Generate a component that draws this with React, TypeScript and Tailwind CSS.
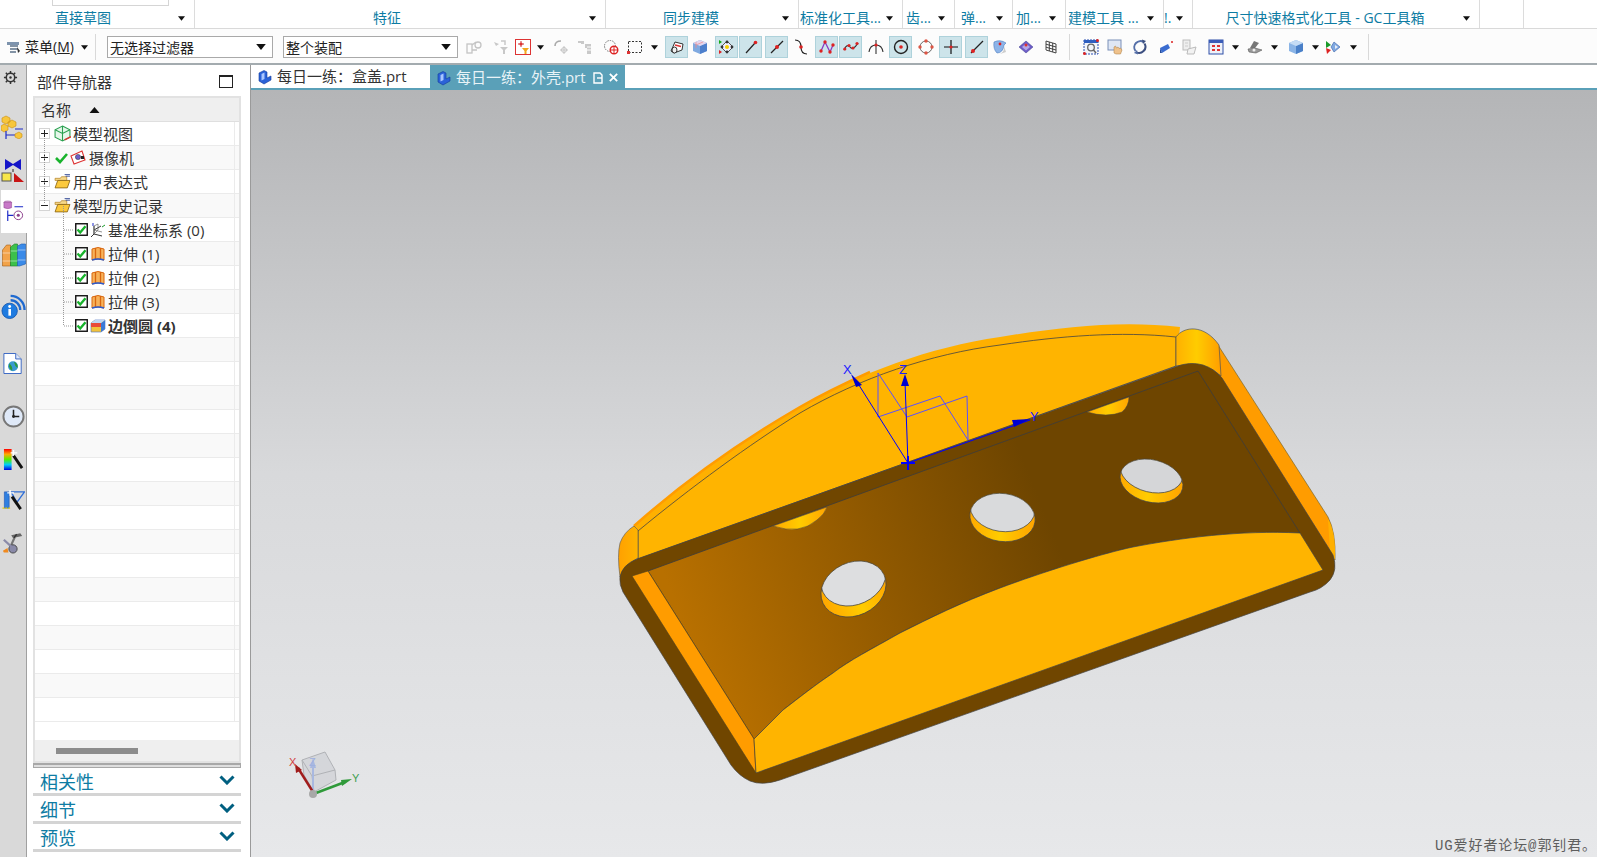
import React from "react";

type P = { c?: string; s?: number; children?: React.ReactNode };
const I = ({ c = "", s = 16, children }: P) => (
  <svg viewBox="0 0 16 16" width={s} height={s} className={`shrink-0 ${c}`}>{children}</svg>
);
const Arrow = ({ c = "" }: { c?: string }) => (
  <svg viewBox="0 0 8 5" width={7} height={5} className={`shrink-0 ${c}`}><path d="M0 0H8L4 5Z" fill="#111" /></svg>
);
const Press = ({ c = "", children }: { c?: string; children?: React.ReactNode }) => (
  <div className={`w-[23px] h-[22px] shrink-0 flex items-center justify-center bg-[#cde4ea] border border-[#aed2db] ${c}`}>{children}</div>
);
const Sep = ({ c = "" }: { c?: string }) => <div className={`w-px h-[26px] bg-[#d9d9d9] shrink-0 ${c}`} />;

const Group = ({ w, label, left = false, pl = "" }: { w: string; label: string; left?: boolean; pl?: string }) => (
  <div className={`${w} h-full shrink-0 border-r border-[#dcdcdc] flex items-center pt-[8px] pr-[9px]`}>
    <div className={`flex-1 min-w-0 whitespace-nowrap overflow-hidden text-[14px] leading-[18px] text-[#0e7ca3] ${left ? "text-left" : "text-center"} ${pl}`}>{label}</div>
    <Arrow />
  </div>
);

const Check = () => (
  <svg viewBox="0 0 13 13" width={13} height={13} className="shrink-0">
    <rect x=".75" y=".75" width="11.5" height="11.5" fill="#fff" stroke="#111" strokeWidth="1.4" />
    <path d="M2.5 6.5L5.2 9.5L10.5 3.2" fill="none" stroke="#18b32c" strokeWidth="2.4" />
  </svg>
);
const Plus = ({ minus = false }: { minus?: boolean }) => (
  <svg viewBox="0 0 11 11" width={11} height={11} className="shrink-0">
    <rect x=".5" y=".5" width="10" height="10" fill="#fff" stroke="#d4d4d4" />
    <path d={minus ? "M2 5.5H9" : "M2 5.5H9M5.5 2V9"} stroke="#222" />
  </svg>
);
const Folder = () => (
  <I s={17} c="ml-[4px]">
    <path d="M1 5H6L7 3.5H12V7H1Z" fill="#f7d98a" stroke="#b5862a" strokeWidth=".7" />
    <path d="M1 14L3.5 7H15L12.5 14Z" fill="#fcc93c" stroke="#8a6414" strokeWidth=".8" />
    <path d="M10 1.5H15M11 3H15" stroke="#26408f" strokeWidth=".8" />
  </I>
);
const Extrude = () => (
  <I>
    <path d="M2 3Q8 0 14 3V14Q8 12 2 14Z" fill="#f7b25a" stroke="#d9660f" strokeWidth="1" />
    <path d="M5.5 2V13M10.5 2V13" stroke="#d9660f" strokeWidth="1.3" />
    <path d="M2 14Q8 12 14 14" stroke="#2a5bd0" strokeWidth="1.4" fill="none" />
  </I>
);

const Row = ({ alt, children, pl }: { alt: boolean; children?: React.ReactNode; pl?: string }) => (
  <div className={`h-[24px] shrink-0 flex border-b border-[#ebebeb] ${alt ? "bg-[#f9f9f9]" : "bg-white"}`}>
    <div className={`flex-1 flex items-center text-[15px] leading-[20px] text-[#333] whitespace-nowrap ${pl ?? ""}`}>{children}</div>
    <div className="w-[5px] border-l border-[#ebebeb]" />
  </div>
);

const Section = ({ t }: { t: string }) => (
  <div className="h-[28px] ml-[6px] mr-[9px] border-b-[3px] border-[#d4d4d4] flex items-center justify-between pl-[7px] pr-[6px] pt-[2px]">
    <span className="text-[18px] leading-[24px] text-[#0e7ca3]">{t}</span>
    <svg viewBox="0 0 16 10" width={16} height={10} className="-mt-[3px]"><path d="M1.5 1.5L8 8L14.5 1.5" fill="none" stroke="#005f80" strokeWidth="3" /></svg>
  </div>
);

const TabIcon = () => (
  <I>
    <path d="M2 4L7 1.5L10 3V9L14 7V11L7 15L2 12Z" fill="#2a62d8" stroke="#123a9a" strokeWidth=".6" />
    <path d="M4.5 5L7.5 3.5V10L4.5 11.5Z" fill="#a9c6ff" />
  </I>
);

const Hole = ({ id, cx, cy, rx, ry, r, fill, dy = 10 }: { id: string; cx: number; cy: number; rx: number; ry: number; r: number; fill: string; dy?: number }) => (
  <g>
    <clipPath id={id}>
      <ellipse cx={cx} cy={cy} rx={rx} ry={ry} transform={`rotate(${r} ${cx} ${cy})`} />
    </clipPath>
    <ellipse cx={cx} cy={cy} rx={rx} ry={ry} transform={`rotate(${r} ${cx} ${cy})`} fill="url(#hy)" />
    <g clipPath={`url(#${id})`}>
      <ellipse cx={cx} cy={cy - dy} rx={rx} ry={ry} transform={`rotate(${r} ${cx} ${cy - dy})`} fill={fill} stroke="#444" strokeWidth=".7" />
    </g>
    <ellipse cx={cx} cy={cy} rx={rx} ry={ry} transform={`rotate(${r} ${cx} ${cy})`} fill="none" stroke="#444" strokeWidth=".7" />
  </g>
);

const Model = () => (
  <svg viewBox="251 90 1346 767" className="absolute left-0 top-0 w-[1346px] h-[767px]">
    <defs>
      <linearGradient id="fl" gradientUnits="userSpaceOnUse" x1="690" y1="640" x2="1040" y2="500">
        <stop offset="0" stopColor="#b87000" />
        <stop offset="1" stopColor="#6e4500" />
      </linearGradient>
      <linearGradient id="hy" x1="0" x2="1" y1="0" y2="0">
        <stop offset="0" stopColor="#ffa800" />
        <stop offset=".5" stopColor="#ffcc00" />
        <stop offset="1" stopColor="#ffa400" />
      </linearGradient>
      <linearGradient id="fr" gradientUnits="userSpaceOnUse" x1="1176" y1="0" x2="1222" y2="0">
        <stop offset="0" stopColor="#ffb000" />
        <stop offset=".45" stopColor="#ffcc00" />
        <stop offset="1" stopColor="#ff9c00" />
      </linearGradient>
      <linearGradient id="fc" gradientUnits="userSpaceOnUse" x1="618" y1="0" x2="638" y2="0">
        <stop offset="0" stopColor="#ffa000" />
        <stop offset="1" stopColor="#ffb400" />
      </linearGradient>
    </defs>
    {/* right wall */}
    <path d="M1218,345 L1328,517 Q1336,532 1335,560 L1220,378 Z" fill="#ff9c00" stroke="#6a5a20" strokeWidth=".6" />
    <path d="M1328,519 Q1336,532 1335,560 L1330,552 Z" fill="#ffb000" />
    {/* top wall */}
    <path d="M634,526 C690,476 750,436 800,407 C860,373 930,347 1000,337 C1060,327 1120,320 1180,327 L1176,365 L638,558 Z" fill="#ffb000" />
    <path d="M634,526 C690,476 750,436 800,407 C830,390 850,381 870,372" fill="none" stroke="#ff9c00" strokeWidth="2.5" />
    <path d="M638,531 C690,488 750,444 800,413 C860,378 930,354 1000,345 C1060,336 1120,331 1176,337 L1176,366 L638,559 Z" fill="#ffb400" stroke="#444" strokeWidth=".8" />
    <path d="M638,530 L634,526 Q624,532 620,543 Q617,555 620,577 Q624,565 638,558 Z" fill="url(#fc)" stroke="#555" strokeWidth=".6" />
    <path d="M1176,337 C1184,326 1204,324 1219,345 L1221,376 Q1204,360 1176,366 Z" fill="url(#fr)" stroke="#555" strokeWidth=".7" />
    {/* rim */}
    <path d="M637,559 L1175,367 Q1190,361 1203,365 Q1215,369 1222,378 L1333,555 Q1338,570 1330,580 Q1322,589 1310,592 L780,780 Q762,786 750,781 Q739,776 731,765 L623,592 Q619,584 620,577 Q622,565 637,559 Z" fill="#704600" stroke="#444" strokeWidth=".7" />
    {/* floor */}
    <path d="M648,571 L1198,371 L1300,533 C1240,530 1180,538 1133,547 C1100,554 1040,573 1000,588 C960,603 930,618 900,633 C870,650 850,660 833,673 C815,685 800,697 783,710 L754,739 Z" fill="url(#fl)" stroke="#3c3c3c" strokeWidth=".8" />
    {/* left wall */}
    <path d="M632,576 L648,571 L754,739 L756,773 Z" fill="#ff9c00" stroke="#4a4020" strokeWidth=".6" />
    {/* bottom wall */}
    <path d="M754,739 L756,773 L1323,570 L1300,533 C1240,530 1180,538 1133,547 C1100,554 1040,573 1000,588 C960,603 930,618 900,633 C870,650 850,660 833,673 C815,685 800,697 783,710 Z" fill="#ffb400" stroke="#444" strokeWidth=".7" />
    {/* half holes */}
    <path d="M773,526 Q800,535 817,520 Q825,514 827,507 Z" fill="url(#hy)" stroke="#444" strokeWidth=".5" />
    <path d="M1087,412 Q1107,418 1122,412 Q1129,406 1129,397 Z" fill="url(#hy)" stroke="#444" strokeWidth=".5" />
    {/* holes */}
    <Hole id="h1" cx={853.5} cy={589} rx={33.7} ry={26.6} r={-25} fill="#dddee0" dy={11} />
    <Hole id="h2" cx={1002.5} cy={517.5} rx={32.8} ry={24} r={8} fill="#d9dadc" />
    <Hole id="h3" cx={1151.5} cy={481} rx={32} ry={21.2} r={14} fill="#d5d6d8" />
    {/* datum csys */}
    <g fill="none" stroke="#5a50ff" strokeWidth="1">
      <path d="M878,373V417M878,373L907,417M878,417L940,396M907,417L967,396M940,396L968,440M967,396L968,440" />
    </g>
    <g stroke="#0000ff" fill="none">
      <path d="M908,463L857,382" />
      <path d="M908,463L905,382" />
      <path d="M908,463L1030,420" strokeWidth="1" />
      <path d="M901,463H915M908,456V470" strokeWidth="2" />
    </g>
    <path d="M851,374L862,385L856,387Z" fill="#0000d0" />
    <path d="M905,374L909,386H901Z" fill="#0000d0" />
    <path d="M1030,419L1014,427L1012,420Z" fill="#0000d0" />
    <g fontFamily="'Liberation Sans',sans-serif" fontSize="13" fill="#2020ff">
      <text x="843" y="374">X</text>
      <text x="899" y="374">Z</text>
      <text x="1030" y="421">Y</text>
    </g>
    {/* triad */}
    <g stroke="#b0b2b6" strokeWidth="1" fill="#c9cbd0" fillOpacity=".55">
      <path d="M302,760L325,752L335,770L336,780L314,792L304,775Z" />
      <path d="M302,760L312,776L335,770M312,776L314,792" fill="none" />
    </g>
    <path d="M313,792V762" stroke="#a8b8e0" strokeWidth="2" />
    <path d="M313,758L316,768H310Z" fill="#a8b8e0" />
    <path d="M313,792L298,768" stroke="#a01c1c" strokeWidth="2.5" />
    <path d="M295,764L302,770L296,773Z" fill="#a01c1c" />
    <path d="M316,793L345,782" stroke="#2f9a3a" strokeWidth="2.5" />
    <path d="M352,779L342,786L341,780Z" fill="#2f9a3a" />
    <circle cx="313" cy="794" r="4" fill="#a8a8a8" />
    <g fontFamily="'Liberation Sans',sans-serif" fontSize="11">
      <text x="289" y="766" fill="#d04040">X</text>
      <text x="309" y="766" fill="#9fb0e0">Z</text>
      <text x="352" y="782" fill="#3fa050">Y</text>
    </g>
  </svg>
);

const rows = Array.from({ length: 16 });

export default function App() {
  return (
    <div className="w-[1597px] h-[857px] overflow-hidden bg-white flex flex-col font-['Open_Sans','Noto_Sans_CJK_SC',sans-serif]">
      {/* ribbon group labels */}
      <div className="h-[29px] shrink-0 flex border-b border-[#d9d9d9] relative">
        <div className="absolute left-[52px] top-0 w-[117px] h-[6px] border border-t-0 border-[#d5d5d5]" />
        <Group w="w-[195px]" label="直接草图" pl="pr-[12px]" />
        <Group w="w-[411px]" label="特征" pl="pr-[10px]" />
        <Group w="w-[193px]" label="同步建模" pl="pr-[6px]" />
        <Group w="w-[104px]" label="标准化工具..." left pl="pl-[1px]" />
        <Group w="w-[52px]" label="齿..." left pl="pl-[3px]" />
        <Group w="w-[58px]" label="弹..." left pl="pl-[6px]" />
        <Group w="w-[53px]" label="加..." left pl="pl-[3px]" />
        <Group w="w-[98px]" label="建模工具 ..." left pl="pl-[2px]" />
        <Group w="w-[29px]" label="!." left />
        <Group w="w-[287px]" label="尺寸快速格式化工具 - GC工具箱" pl="pr-[6px]" />
        <div className="w-[44px] h-full shrink-0 border-r border-[#dcdcdc]" />
      </div>

      {/* toolbar */}
      <div className="h-[36px] shrink-0 flex items-center border-b-2 border-[#a3abaf] bg-[#fcfcfc] pt-[2px]">
        <I c="ml-[5px]">
          <path d="M2 3H14V6H2Z" fill="#7d93ad" />
          <path d="M5 7H13M5 10H13M5 13H11" stroke="#5b7088" strokeWidth="1.4" />
          <path d="M12 8L15 12L13 14Z" fill="#333" />
        </I>
        <span className="ml-[4px] w-[50px] text-[14px] leading-[18px] text-[#222] whitespace-nowrap">菜单(<u>M</u>)</span>
        <Arrow c="ml-[6px]" />
        <Sep c="ml-[7px]" />
        <div className="ml-[11px] w-[166px] h-[22px] shrink-0 border border-[#a9a9a9] bg-white flex items-center justify-between pl-[2px] pr-[6px] text-[14px] text-[#222]">
          无选择过滤器<Arrow c="w-[10px] h-[6px]" />
        </div>
        <div className="ml-[10px] w-[175px] h-[22px] shrink-0 border border-[#a9a9a9] bg-white flex items-center justify-between pl-[2px] pr-[6px] text-[14px] text-[#222]">
          整个装配<Arrow c="w-[10px] h-[6px]" />
        </div>
        <I c="ml-[8px]"><g fill="none" stroke="#c4c4c4" strokeWidth="1.3"><rect x="1" y="5" width="5" height="9" /><circle cx="12" cy="6" r="3" /><path d="M6 6L10 3M6 11H11" /></g></I>
        <I c="ml-[11px]"><path d="M1 3L6 5L3 7ZM7 8H15L12 11V15H10V11Z" fill="#c8c8c8" /><path d="M8 2H12V6" stroke="#c8c8c8" strokeWidth="1.5" fill="none" /></I>
        <I c="ml-[6px]"><rect x=".5" y=".5" width="15" height="15" fill="#fff" stroke="#d33" /><path d="M3 5H9M6 2V8" stroke="#c33" /><circle cx="6" cy="5" r="1.5" fill="#d33" /><path d="M7 9H14L11.5 12V15H9.5V12Z" fill="#f2a81d" /></I>
        <Arrow c="ml-[6px]" />
        <I c="ml-[9px]"><path d="M2 7Q2 2 8 2" stroke="#aaa" strokeWidth="1.6" fill="none" /><path d="M7 11H15M11 7V15" stroke="#c4c4c4" /><circle cx="11" cy="11" r="2.5" fill="none" stroke="#c4c4c4" /></I>
        <I c="ml-[8px]"><path d="M1 2H7V5H4V4H1ZM8 5H14V15H10V9H8Z" fill="#c9c9c9" /><path d="M10 8H14M10 11H14" stroke="#fff" /></I>
        <I c="ml-[10px]"><circle cx="7" cy="7" r="5.5" fill="none" stroke="#777" strokeDasharray="1.5 1" /><circle cx="11" cy="11" r="3.8" fill="#fff" stroke="#d22" strokeWidth="1.4" /><path d="M7 11H15M11 7V15" stroke="#d22" /></I>
        <I c="ml-[8px]"><rect x="1.5" y="2.5" width="13" height="11" fill="none" stroke="#333" strokeDasharray="2 1.5" /><rect x="0" y="12" width="3" height="3" fill="#d33" /></I>
        <Arrow c="ml-[8px]" />
        <Press c="ml-[7px]"><I><path d="M2 12L6 3L14 5L13 11L5 14Z" fill="#fff" stroke="#333" /><path d="M6 6L12 7.5" stroke="#d33" strokeWidth="1.5" /><ellipse cx="5.5" cy="11" rx="2.5" ry="3" fill="#eee" stroke="#333" /></I></Press>
        <I c="ml-[4px]"><path d="M1 4L8 1L15 4V12L8 15L1 12Z" fill="#7fa9e0" /><path d="M8 7L15 4V12L8 15Z" fill="#4d7fcc" /><path d="M1 4L8 1L15 4L8 7Z" fill="#e3d6ee" /><path d="M4 3V9M4 6L11 3" stroke="#e88" strokeWidth=".7" /></I>
        <Press c="ml-[7px]"><I><path d="M8 2L14 8L8 14L2 8Z" fill="#eef" stroke="#555" /><circle cx="8" cy="8" r="2" fill="#f5d000" /><circle cx="8" cy="3" r="1.4" fill="#333" /><circle cx="8" cy="13" r="1.4" fill="#333" /><circle cx="13" cy="8" r="1.4" fill="#333" /><circle cx="3" cy="8" r="1.4" fill="#333" /><path d="M0 1L3 3L0 5Z" fill="#1a1" /><path d="M0 11L3 13L0 15Z" fill="#d22" /></I></Press>
        <Press c="ml-[1px]"><I><path d="M3 14L12 4" stroke="#222" strokeWidth="1.2" /><circle cx="12.5" cy="3.5" r="1.8" fill="#d22" /></I></Press>
        <Press c="ml-[3px]"><I><path d="M2 14L14 2" stroke="#222" strokeWidth="1.2" /><circle cx="8" cy="8" r="2" fill="#d22" /></I></Press>
        <I c="ml-[5px]"><path d="M2 1Q8 1 8 8Q8 15 14 15" fill="none" stroke="#222" strokeWidth="1.2" /><circle cx="8" cy="8" r="1.8" fill="#d22" /></I>
        <Press c="ml-[6px]"><I><path d="M2 12L6 3L11 13L14 6" fill="none" stroke="#8a3ac0" strokeWidth="1.3" /><circle cx="2" cy="12" r="1.7" fill="#d22" /><circle cx="6" cy="3" r="1.7" fill="#d22" /><circle cx="11" cy="13" r="1.7" fill="#d22" /><circle cx="14" cy="6" r="1.7" fill="#d22" /></I></Press>
        <Press c="ml-[1px]"><I><path d="M1 11Q4 4 7 8T15 4" fill="none" stroke="#333" strokeWidth="1.2" /><circle cx="1.8" cy="10" r="1.6" fill="#d22" /><circle cx="6" cy="6.5" r="1.6" fill="#d22" /><circle cx="10" cy="9" r="1.6" fill="#d22" /><circle cx="14" cy="4.5" r="1.6" fill="#d22" /></I></Press>
        <I c="ml-[6px]"><path d="M1 13Q2 6 8 6T15 13M8 1V15" fill="none" stroke="#333" strokeWidth="1.1" /><circle cx="8" cy="6" r="1.6" fill="#d22" /></I>
        <Press c="ml-[5px]"><I><circle cx="8" cy="8" r="6.5" fill="none" stroke="#222" strokeWidth="1.4" /><circle cx="8" cy="8" r="1.8" fill="#d22" /></I></Press>
        <I c="ml-[6px]"><circle cx="8" cy="8" r="6" fill="none" stroke="#666" /><circle cx="8" cy="2" r="1.7" fill="#d54" /><circle cx="8" cy="14" r="1.7" fill="#d54" /><circle cx="2" cy="8" r="1.7" fill="#d54" /><circle cx="14" cy="8" r="1.7" fill="#d54" /></I>
        <Press c="ml-[5px]"><I><path d="M1 8H15M8 1V15" stroke="#111" strokeWidth="1.2" /><circle cx="8" cy="8" r="1.6" fill="#d22" /></I></Press>
        <Press c="ml-[3px]"><I><path d="M2 14L14 2" stroke="#222" strokeWidth="1.2" /><circle cx="4" cy="12" r="2" fill="#d22" /></I></Press>
        <I c="ml-[4px]"><path d="M2 3Q8 0 14 4L12 6Q11 14 5 14Q1 10 2 3Z" fill="#8db4e8" stroke="#4a7cc0" strokeWidth=".6" /><path d="M12 7Q13 12 8 15L14 13Z" fill="#ccc" /><circle cx="8" cy="5" r="1.4" fill="#d22" /></I>
        <I c="ml-[10px]"><path d="M1 8L8 2L15 8L8 14Z" fill="#6d5cc8" stroke="#3b3b8a" strokeWidth=".5" /><path d="M4 8L8 4.5L12 8L8 11.5Z" fill="#b3a6e6" /><circle cx="8" cy="6" r="1.5" fill="#d33" /></I>
        <I c="ml-[9px]"><path d="M3 2L13 5V14L3 11ZM6.3 3V12M9.7 4V13M3 5.2L13 8M3 8.2L13 11" fill="none" stroke="#333" strokeWidth=".9" /></I>
        <Sep c="ml-[10px]" />
        <I c="ml-[13px]"><rect x="1" y="1" width="14" height="14" fill="#f2f5fb" stroke="#2a4fb0" strokeDasharray="2 1" /><rect x="1" y="1" width="14" height="3" fill="#2f5fc0" /><circle cx="8" cy="8.5" r="3.3" fill="none" stroke="#666" strokeWidth="1.3" /><path d="M10.5 11L13 14" stroke="#666" strokeWidth="1.5" /><circle cx="1.5" cy="14.5" r="1.5" fill="#d22" /><circle cx="14.5" cy="1.5" r="1.5" fill="#d22" /></I>
        <I c="ml-[8px]"><rect x="1" y="1" width="13" height="10" fill="#dfe7f5" stroke="#7a8fb8" /><path d="M7 14V8L8.5 7L9.5 9L11 8L12 9.5L13.5 9L15 11L13.5 15H9Z" fill="#efc28c" stroke="#a87a3f" strokeWidth=".5" /></I>
        <I c="ml-[9px]"><path d="M12 3.2A6.2 6.2 0 0 0 3.5 12" fill="none" stroke="#556fa8" strokeWidth="2" /><path d="M4 13A6.2 6.2 0 0 0 12.5 4.5" fill="none" stroke="#3c4f80" strokeWidth="2" /><path d="M10 0.5L14 2L11 5Z" fill="#3c4f80" /><path d="M6 15.5L2 14L5 11Z" fill="#556fa8" /></I>
        <I c="ml-[10px]"><path d="M2 9L10 5L12 9L4 14Z" fill="#3a6cd0" /><path d="M2 9L4 14L2 14Z" fill="#244a9a" /><circle cx="14" cy="3" r="1" fill="#d22" /></I>
        <I c="ml-[7px]"><rect x="2" y="1" width="7" height="10" fill="#eee" stroke="#bbb" /><path d="M7 10L15 8L13 15L6 15Z" fill="#f2f2f2" stroke="#bbb" /><path d="M4 4H7M4 7H7" stroke="#ccc" /></I>
        <I c="ml-[11px]"><rect x="1" y="1" width="14" height="14" fill="#eef1f8" stroke="#2f4fa8" /><rect x="1" y="1" width="14" height="3" fill="#3a5cb8" /><path d="M4 6H7V8H4ZM9 6H12V8H9ZM4 10H7V12H4ZM9 10H12V12H9Z" fill="#d33" /></I>
        <Arrow c="ml-[8px]" />
        <I c="ml-[8px]"><path d="M3 9L7 2L12 4L8 9Z" fill="#777" /><path d="M1 10L8 9L15 11L9 14L2 13Z" fill="#999" stroke="#555" strokeWidth=".6" /><circle cx="7" cy="11" r="1.5" fill="#eee" /></I>
        <Arrow c="ml-[8px]" />
        <I c="ml-[10px]"><path d="M1 4L8 1L15 4V12L8 15L1 12Z" fill="#8ab4e6" /><path d="M8 7L15 4V12L8 15Z" fill="#4a80c8" /><path d="M1 4L8 1L15 4L8 7Z" fill="#c5dcf5" /></I>
        <Arrow c="ml-[8px]" />
        <I c="ml-[7px]"><path d="M8 3L14 8L8 13L5 8Z" fill="#7fa8e0" stroke="#4a70b0" strokeWidth=".7" /><path d="M9 6L12 8L9 10Z" fill="#e8eef8" /><path d="M0 2L5 6L0 9Z" fill="#1a9a2a" /><path d="M0 9L5 11L1 15Z" fill="#d22" /></I>
        <Arrow c="ml-[8px]" />
        <Sep c="ml-[11px]" />
      </div>

      <div className="flex-1 flex min-h-0">
        {/* left rail */}
        <div className="w-[27px] shrink-0 bg-[#d9d9d9] border-r border-[#a0a0a0] flex flex-col items-center">
          <I c="mt-[5px] -ml-[5px]" s={15}><circle cx="8" cy="8" r="4.5" fill="none" stroke="#333" strokeWidth="1.6" /><circle cx="8" cy="8" r="1.3" fill="#333" /><path d="M8 1V3.5M8 12.5V15M1 8H3.5M12.5 8H15M3 3L4.8 4.8M11.2 11.2L13 13M13 3L11.2 4.8M4.8 11.2L3 13" stroke="#333" strokeWidth="1.6" /></I>
          <svg viewBox="0 0 24 24" width={24} height={24} className="mt-[30px] shrink-0">
            <path d="M5 1L9 3V7L5 9L1 7V3ZM11 5L15 7V11L11 13L7 11V7ZM3 9L7 11V15L3 17L0 15V11Z" fill="#f7c63c" stroke="#c98f10" strokeWidth=".6" />
            <path d="M5 16V24M5 20H14M14 14H22" stroke="#1a28c8" strokeWidth="1.2" fill="none" />
            <path d="M14 19L18 17L21 19V22L18 24L14 22Z" fill="#f7c63c" stroke="#c98f10" strokeWidth=".6" />
          </svg>
          <svg viewBox="0 0 24 24" width={24} height={24} className="mt-[20px] shrink-0">
            <path d="M4 0L12 5L20 0V11L12 6L4 11Z" fill="#1515c8" />
            <path d="M12 10V13" stroke="#222" />
            <rect x="1" y="14" width="9" height="8" fill="#f7e64a" stroke="#555" />
            <path d="M13 14L23 23H13Z" fill="#c81414" />
          </svg>
          <div className="w-[26px] h-[43px] mt-[7px] -mr-px bg-white flex items-center justify-center shrink-0">
            <svg viewBox="0 0 24 24" width={23} height={23}>
              <ellipse cx="6" cy="2.5" rx="4" ry="1.5" fill="#d8a8d8" stroke="#8a3c8a" strokeWidth=".5" />
              <path d="M2 2.5V8Q6 10 10 8V2.5Z" fill="#c878c8" stroke="#8a3c8a" strokeWidth=".5" />
              <path d="M6 11V22M6 16H12M13 7H22" stroke="#1a28c8" strokeWidth="1.2" fill="none" />
              <circle cx="17" cy="16" r="4.5" fill="none" stroke="#8a3c8a" />
              <circle cx="17" cy="16" r="1.6" fill="#8a3c8a" />
            </svg>
          </div>
          <svg viewBox="0 0 24 24" width={25} height={24} className="mt-[10px] shrink-0">
            <path d="M1 7L5 2H9V23H1Z" fill="#f2a34a" stroke="#a35c10" strokeWidth=".6" />
            <path d="M9 4L13 1H16V23H9Z" fill="#3cc04a" stroke="#1a7a28" strokeWidth=".6" />
            <path d="M16 3L20 1H24V21L18 23H16Z" fill="#3a8ae8" stroke="#1a5ab0" strokeWidth=".6" />
            <path d="M1 10H9M1 18H9M9 8H16M9 18H16M16 7H24M16 17H24" stroke="#fff" strokeOpacity=".6" strokeWidth=".8" />
          </svg>
          <svg viewBox="0 0 26 26" width={25} height={26} className="mt-[27px] shrink-0">
            <circle cx="9" cy="17" r="8" fill="#1f7be0" stroke="#0d4fa8" strokeWidth=".8" />
            <circle cx="9" cy="12.5" r="1.5" fill="#fff" />
            <rect x="7.7" y="15" width="2.7" height="7" fill="#fff" />
            <path d="M10 6A10 10 0 0 1 20 16M10 1.5A14.5 14.5 0 0 1 24.5 16" fill="none" stroke="#1f6ad0" strokeWidth="2.4" />
          </svg>
          <svg viewBox="0 0 22 24" width={20} height={23} className="mt-[32px] shrink-0">
            <path d="M1 1H14L20 7V23H1Z" fill="#fff" stroke="#2f5fc0" strokeWidth="1" />
            <path d="M14 1V7H20" fill="#dfe7f8" stroke="#2f5fc0" />
            <circle cx="11" cy="15" r="5.5" fill="#3a9ad0" />
            <path d="M7 12Q11 15 10 20Q7 18 6.5 15ZM12 10Q17 12 16 17Q13 15 12 10Z" fill="#2f9a3a" />
          </svg>
          <svg viewBox="0 0 24 24" width={23} height={23} className="mt-[30px] shrink-0">
            <circle cx="12" cy="12" r="10.5" fill="#dfe9f8" stroke="#777" strokeWidth="2" />
            <path d="M12 5V12H18" stroke="#222" strokeWidth="1.6" fill="none" />
            <circle cx="12" cy="12" r="1.5" fill="#222" />
          </svg>
          <svg viewBox="0 0 22 24" width={21} height={23} className="mt-[20px] shrink-0">
            <defs>
              <linearGradient id="rb" x1="0" x2="0" y1="0" y2="1">
                <stop offset="0" stopColor="#f00" /><stop offset=".25" stopColor="#fa0" /><stop offset=".5" stopColor="#5e0" /><stop offset=".75" stopColor="#0cf" /><stop offset="1" stopColor="#00d" />
              </linearGradient>
            </defs>
            <rect x="1" y="1" width="8" height="22" fill="url(#rb)" />
            <path d="M11 8L20 21" stroke="#111" strokeWidth="3" />
            <path d="M11 2V8M8 5H15" stroke="#fff" strokeWidth="1.4" />
          </svg>
          <svg viewBox="0 0 24 24" width={24} height={23} className="mt-[18px] shrink-0">
            <path d="M3 3H8V20H3Z" fill="#2f7fe0" stroke="#1a50b0" strokeWidth=".6" />
            <path d="M10 3H24L16 14Z" fill="none" stroke="#2f6fd8" strokeWidth="1.4" />
            <path d="M11 8L20 21" stroke="#111" strokeWidth="3" />
            <path d="M9 1V7M6 4H13" stroke="#fff" strokeWidth="1.4" />
            <path d="M1 20H9" stroke="#f0d000" strokeWidth="1.4" strokeDasharray="2 1" />
          </svg>
          <svg viewBox="0 0 24 24" width={22} height={23} className="mt-[19px] shrink-0">
            <path d="M10 4L20 2L22 5L12 7Z" fill="#666" />
            <path d="M14 6L9 17" stroke="#777" strokeWidth="2.4" />
            <path d="M16 3L13 7" stroke="#333" strokeWidth="1.5" />
            <circle cx="12" cy="19" r="4.5" fill="#8a8aa8" stroke="#444" />
            <path d="M2 9L14 20" stroke="#8a8aa8" strokeWidth="2.4" />
            <path d="M1 21L6 18L7 23H2Z" fill="#f08a20" />
          </svg>
        </div>

        {/* part navigator */}
        <div className="w-[224px] shrink-0 border-r border-[#9a9a9a] bg-white flex flex-col">
          <div className="h-[31px] shrink-0 flex items-center justify-between pl-[10px] pr-[17px] pt-[2px]">
            <span className="text-[15px] leading-[20px] text-[#333]">部件导航器</span>
            <div className="w-[14px] h-[13px] border border-t-2 border-[#222]" />
          </div>
          <div className="h-[667px] shrink-0 ml-[6px] mr-[9px] border-2 border-[#e2e2e2] flex flex-col relative overflow-hidden">
            <div className="h-[24px] shrink-0 bg-[#efefef] border-b border-[#dfdfdf] flex items-center pl-[6px]">
              <span className="text-[15px] leading-[20px] text-[#333]">名称</span>
              <svg viewBox="0 0 10 6" width={11} height={6} className="ml-[18px]"><path d="M0 6L5 0L10 6Z" fill="#111" /></svg>
            </div>
            <div className="flex-1 min-h-0 overflow-hidden flex flex-col">
              <Row alt={false} pl="pl-[4px]">
                <Plus />
                <I c="ml-[4px]" s={17}><path d="M8 1L15 4.5V11.5L8 15L1 11.5V4.5Z" fill="#e5f7ea" stroke="#2aa050" /><path d="M1 4.5L8 8L15 4.5M8 8V15M8 1V8" stroke="#2aa050" fill="none" /><path d="M10 14L16 11" stroke="#d33" strokeWidth="1.4" /></I>
                <span className="ml-[2px]">模型视图</span>
              </Row>
              <Row alt pl="pl-[4px]">
                <Plus />
                <svg viewBox="0 0 13 12" width={13} height={12} className="ml-[5px] shrink-0"><path d="M1 6L5 10L12 2" fill="none" stroke="#18b32c" strokeWidth="2.6" /></svg>
                <I c="ml-[2px]"><path d="M1 6L12 1L15 10L4 14Z" fill="#fff" stroke="#d33" strokeWidth="1.1" /><circle cx="8" cy="7" r="2.6" fill="#6d5cc8" stroke="#333" strokeWidth=".5" /><rect x="11" y="6" width="3" height="3" fill="#222" /></I>
                <span className="ml-[3px]">摄像机</span>
              </Row>
              <Row alt={false} pl="pl-[4px]">
                <Plus />
                <Folder />
                <span className="ml-[2px]">用户表达式</span>
              </Row>
              <Row alt pl="pl-[4px]">
                <Plus minus />
                <Folder />
                <span className="ml-[2px]">模型历史记录</span>
              </Row>
              <Row alt={false} pl="pl-[40px]">
                <Check />
                <I c="ml-[2px]"><path d="M4 4V12L12 14M4 12L1 15M4 8L11 4" fill="none" stroke="#333" /><path d="M4 4L8 2V8L4 12ZM4 8L12 10" fill="none" stroke="#666" strokeWidth=".7" /><path d="M3 1V4" stroke="#1a28c8" /><path d="M12 5L15 3" stroke="#1a9a2a" /></I>
                <span className="ml-[2px]">基准坐标系 (0)</span>
              </Row>
              <Row alt pl="pl-[40px]"><Check /><span className="ml-[2px]"><Extrude /></span><span className="ml-[2px]">拉伸 (1)</span></Row>
              <Row alt={false} pl="pl-[40px]"><Check /><span className="ml-[2px]"><Extrude /></span><span className="ml-[2px]">拉伸 (2)</span></Row>
              <Row alt pl="pl-[40px]"><Check /><span className="ml-[2px]"><Extrude /></span><span className="ml-[2px]">拉伸 (3)</span></Row>
              <Row alt={false} pl="pl-[40px]">
                <Check />
                <I c="ml-[2px]"><path d="M1 5L5 2H15V11L11 14H1Z" fill="#f2c23c" stroke="#4a6fc0" strokeWidth=".6" /><path d="M1 5H11V9H1Z" fill="#e84a3a" /><path d="M11 5L15 2V11L11 14Z" fill="#3a7ad8" /><path d="M1 5L5 2H15L11 5Z" fill="#bcd6f5" /></I>
                <span className="ml-[2px] font-bold">边倒圆 (4)</span>
              </Row>
              {rows.map((_, i) => <Row key={i} alt={i % 2 === 0} />)}
            </div>
            <div className="h-[21px] shrink-0 bg-[#efefef] pt-[8px] pl-[21px] relative">
              <div className="w-[82px] h-[6px] bg-[#8c8c8c]" />
            </div>
            <svg viewBox="0 0 60 220" width={60} height={220} className="absolute left-0 top-[24px] pointer-events-none">
              <path d="M9.5 16V82M28.5 84V204M29 108H39M29 132H39M29 156H39M29 180H39M29 204H39" stroke="#999" strokeDasharray="1 1" fill="none" />
            </svg>
          </div>
          <div className="h-[5px] shrink-0 ml-[6px] mr-[9px] bg-[#dedede] border border-t-2 border-[#a8a8a8]" />
          <Section t="相关性" />
          <Section t="细节" />
          <Section t="预览" />
        </div>

        {/* main area */}
        <div className="flex-1 min-w-0 flex flex-col">
          <div className="h-[25px] shrink-0 flex border-b-2 border-[#5aa0b8] bg-white">
            <div className="w-[179px] flex items-center pl-[6px] text-[15px] text-[#333] whitespace-nowrap">
              <TabIcon /><span className="ml-[4px]">每日一练：盒盖.prt</span>
            </div>
            <div className="w-[195px] -mb-[2px] flex items-center pl-[6px] bg-[#5aa0b8] text-[15px] text-[#e8f3f7] whitespace-nowrap">
              <TabIcon /><span className="ml-[4px]">每日一练：外壳.prt</span>
              <svg viewBox="0 0 12 12" width={12} height={12} className="ml-[6px]"><path d="M2 1H8L10 3V11H2Z" fill="none" stroke="#fff" strokeWidth="1.4" /><path d="M5 6H10" stroke="#fff" strokeWidth="1.4" /></svg>
              <svg viewBox="0 0 12 12" width={11} height={11} className="ml-[4px]"><path d="M2 2L10 10M10 2L2 10" stroke="#fff" strokeWidth="2" /></svg>
            </div>
          </div>
          <div className="flex-1 relative overflow-hidden bg-gradient-to-b from-[#b4b5b7] via-[#d8d9db] via-50% to-[#e7e8ea]">
            <Model />
            <div className="absolute right-0 bottom-[2px] text-[14px] leading-[18px] tracking-[0.9px] text-[#5e5e5e] whitespace-nowrap font-['Liberation_Mono','Noto_Sans_CJK_SC',monospace]">UG爱好者论坛@郭钊君。</div>
          </div>
        </div>
      </div>
    </div>
  );
}
